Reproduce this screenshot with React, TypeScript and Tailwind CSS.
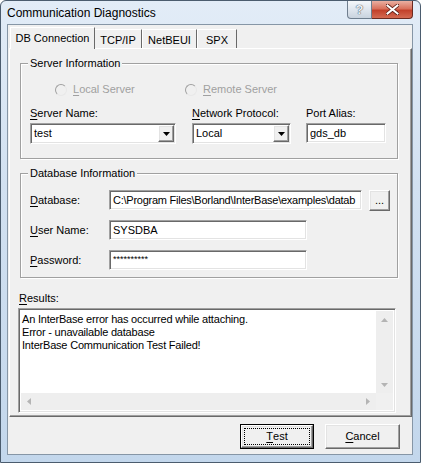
import React from "react";

const sunken =
  "border border-t-[#a0a0a0] border-l-[#a0a0a0] border-r-white border-b-white shadow-[inset_1px_1px_0_#696969,inset_-1px_-1px_0_#e3e3e3]";
const raised =
  "border border-t-white border-l-white border-r-[#696969] border-b-[#696969] shadow-[inset_-1px_-1px_0_#a0a0a0,inset_1px_1px_0_#e3e3e3]";

function DownTri({ color = "#000" }: { color?: string }) {
  return (
    <svg width="7" height="4" viewBox="0 0 7 4">
      <path d="M0 0H7L3.5 4Z" fill={color} />
    </svg>
  );
}
function UpTri({ color = "#000" }: { color?: string }) {
  return (
    <svg width="7" height="4" viewBox="0 0 7 4">
      <path d="M0 4H7L3.5 0Z" fill={color} />
    </svg>
  );
}
function LeftTri({ color = "#000" }: { color?: string }) {
  return (
    <svg width="4" height="7" viewBox="0 0 4 7">
      <path d="M4 0V7L0 3.5Z" fill={color} />
    </svg>
  );
}
function RightTri({ color = "#000" }: { color?: string }) {
  return (
    <svg width="4" height="7" viewBox="0 0 4 7">
      <path d="M0 0V7L4 3.5Z" fill={color} />
    </svg>
  );
}

function Combo({ className, value }: { className: string; value: string }) {
  return (
    <div className={`${sunken} ${className} flex h-[21px] bg-white p-[1px]`}>
      <div className="flex flex-1 items-center pl-[2px] leading-[13px]">{value}</div>
      <div className={`${raised} flex h-[17px] w-[16px] items-center justify-center bg-[#f0f0f0]`}>
        <DownTri />
      </div>
    </div>
  );
}

function Input({ className, children }: { className: string; children?: React.ReactNode }) {
  return (
    <div className={`${sunken} ${className} flex h-[20px] items-center bg-white pl-[3px] leading-[13px]`}>
      {children}
    </div>
  );
}

function Radio({ children }: { children: React.ReactNode }) {
  return (
    <div className="flex items-center text-[#a0a0a0]">
      <span className="mr-[6px] block h-[12px] w-[12px] rounded-full border border-t-[#a0a0a0] border-l-[#a0a0a0] border-r-[#e8e8e8] border-b-[#e8e8e8] bg-[#f0f0f0]" />
      <span className="leading-[13px]">{children}</span>
    </div>
  );
}

function U({ children }: { children: React.ReactNode }) {
  return <span className="underline underline-offset-[2px]">{children}</span>;
}

export default function App() {
  return (
    <div className="h-[463px] w-[421px] overflow-hidden rounded-t-[6px] border border-[#4b5c6e] bg-[linear-gradient(180deg,#e2ecf7_0%,#d2e1f1_40%,#c3d7ec_100%)] text-[11px] text-black [font-family:'Liberation_Sans',Arial,sans-serif]">
      {/* title bar */}
      <div className="flex h-[23px] items-start">
        <div className="ml-[6px] mt-[5px] text-[12px] leading-[14px] text-black">Communication Diagnostics</div>
        <div className="ml-auto mr-[7px] flex">
          <div className="flex h-[18px] w-[25px] items-center justify-center rounded-bl-[4px] border border-t-0 border-[#6f7e8e] bg-[linear-gradient(180deg,#f4f7fa_0%,#dfe6ee_50%,#c9d3de_100%)] text-[13px] font-bold leading-none text-[#eef2f6] [text-shadow:0_0_1px_#3f4c5a,0_0_1px_#3f4c5a]">
            ?
          </div>
          <div className="flex h-[18px] w-[41px] items-center justify-center rounded-br-[4px] border border-l-0 border-t-0 border-[#6b2a20] bg-[linear-gradient(180deg,#eab0a2_0%,#d9715c_45%,#c2412b_55%,#d46a52_100%)]">
            <svg width="13" height="11" viewBox="0 0 13 11">
              <path d="M1 1L12 10M12 1L1 10" stroke="#5a1c14" strokeWidth="3.6" strokeLinecap="square" />
              <path d="M1.5 1.5L11.5 9.5M11.5 1.5L1.5 9.5" stroke="#ffffff" strokeWidth="2" strokeLinecap="square" />
            </svg>
          </div>
        </div>
      </div>

      {/* client */}
      <div className="ml-[6px] h-[431px] w-[406px] border border-[#8696a6] bg-[#f0f0f0]">
        {/* tabs */}
        <div className="ml-[2px] mt-[2px] flex h-[21px] items-end">
          <div className="relative z-10 -mb-[1px] flex h-[22px] w-[85px] items-start justify-center border-l border-t border-r border-l-white border-t-white border-r-[#696969] bg-[#f0f0f0] pt-[4px] leading-[13px]">
            DB Connection
          </div>
          <div className="flex h-[19px] w-[47px] items-start justify-center border-t border-r border-t-white border-r-[#696969] pt-[4px] leading-[13px]">
            TCP/IP
          </div>
          <div className="flex h-[19px] w-[55px] items-start justify-center border-l border-t border-r border-l-white border-t-white border-r-[#696969] pt-[4px] leading-[13px]">
            NetBEUI
          </div>
          <div className="flex h-[19px] w-[40px] items-start justify-center border-l border-t border-r border-l-white border-t-white border-r-[#696969] pt-[4px] leading-[13px]">
            SPX
          </div>
        </div>

        {/* sheet */}
        <div className="ml-[1px] flex h-[369px] w-[403px] flex-col border border-t-white border-l-white border-r-[#696969] border-b-[#696969] shadow-[inset_-1px_-1px_0_#a0a0a0]">
          {/* Server Information */}
          <fieldset className="ml-[10px] mt-[8px] h-[102px] w-[378px] border border-[#a0a0a0] p-0 shadow-[1px_1px_0_#ffffff,inset_1px_1px_0_#ffffff]">
            <legend className="ml-[7px] bg-[#f0f0f0] px-[2px] leading-[13px]">Server Information</legend>
            <div className="mt-[13px] flex h-[13px] items-center">
              <div className="ml-[34px] w-[130px]">
                <Radio>
                  <U>L</U>ocal Server
                </Radio>
              </div>
              <Radio>
                <U>R</U>emote Server
              </Radio>
            </div>
            <div className="ml-[9px] mt-[11px] flex">
              <div className="flex w-[146px] flex-col">
                <div className="leading-[13px]">
                  <U>S</U>erver Name:
                </div>
                <Combo className="mt-[3px] w-[146px]" value="test" />
              </div>
              <div className="ml-[16px] flex w-[99px] flex-col">
                <div className="leading-[13px]">
                  <U>N</U>etwork Protocol:
                </div>
                <Combo className="mt-[3px] w-[99px]" value="Local" />
              </div>
              <div className="ml-[15px] flex w-[80px] flex-col">
                <div className="leading-[13px]">Port Alias:</div>
                <Input className="mt-[3px] w-[80px]">gds_db</Input>
              </div>
            </div>
          </fieldset>

          {/* Database Information */}
          <fieldset className="ml-[10px] mt-[8px] h-[111px] w-[378px] border border-[#a0a0a0] p-0 shadow-[1px_1px_0_#ffffff,inset_1px_1px_0_#ffffff]">
            <legend className="ml-[7px] bg-[#f0f0f0] px-[2px] leading-[13px]">Database Information</legend>
            <div className="ml-[9px] mt-[10px] flex flex-col gap-[10px]">
              <div className="flex h-[20px] items-center">
                <div className="w-[79px] leading-[13px]">
                  <U>D</U>atabase:
                </div>
                <Input className="w-[253px] overflow-hidden whitespace-nowrap tracking-[-0.25px]">
                  C:\Program Files\Borland\InterBase\examples\datab
                </Input>
                <div className={`${raised} ml-[7px] flex h-[21px] w-[21px] items-center justify-center bg-[#f0f0f0] leading-[13px]`}>
                  ...
                </div>
              </div>
              <div className="flex h-[20px] items-center">
                <div className="w-[79px] leading-[13px]">
                  <U>U</U>ser Name:
                </div>
                <Input className="w-[198px]">SYSDBA</Input>
              </div>
              <div className="flex h-[20px] items-center">
                <div className="w-[79px] leading-[13px]">
                  <U>P</U>assword:
                </div>
                <Input className="w-[198px]">
                  <span className="-mt-[2px] text-[9px] leading-[9px]">**********</span>
                </Input>
              </div>
            </div>
          </fieldset>

          {/* Results */}
          <div className="ml-[9px] mt-[14px] leading-[13px]">
            <U>R</U>esults:
          </div>
          <div className={`${sunken} ml-[8px] mt-[3px] flex h-[105px] w-[378px] flex-col bg-white p-[2px]`}>
            <div className="flex flex-1">
              <div className="flex-1 pl-[1px] pt-[2px] leading-[13px] tracking-[-0.2px]">
                <div>An InterBase error has occurred while attaching.</div>
                <div>Error - unavailable database</div>
                <div>InterBase Communication Test Failed!</div>
              </div>
              <div className="flex w-[17px] flex-col bg-[#eeeeee]">
                <div className="flex h-[17px] items-center justify-center">
                  <UpTri color="#b4b4b4" />
                </div>
                <div className="flex-1" />
                <div className="flex h-[17px] items-center justify-center">
                  <DownTri color="#b4b4b4" />
                </div>
              </div>
            </div>
            <div className="flex h-[17px]">
              <div className="flex flex-1 items-center justify-between bg-[#eeeeee] px-[6px]">
                <LeftTri color="#b4b4b4" />
                <RightTri color="#b4b4b4" />
              </div>
              <div className="w-[17px] bg-[#f0f0f0]" />
            </div>
          </div>
        </div>

        {/* buttons */}
        <div className="mt-[7px] flex">
          <div className="ml-[232px] flex h-[25px] w-[74px] border border-black">
            <div className={`${raised} flex flex-1 items-center justify-center bg-[#f0f0f0] p-[2px]`}>
              <div className="flex h-full w-full items-center justify-center border border-dotted border-black leading-[13px]">
                <U>T</U>est
              </div>
            </div>
          </div>
          <div className={`${raised} ml-[11px] flex h-[25px] w-[75px] items-center justify-center bg-[#f0f0f0] leading-[13px]`}>
            <U>C</U>ancel
          </div>
        </div>
      </div>
    </div>
  );
}
